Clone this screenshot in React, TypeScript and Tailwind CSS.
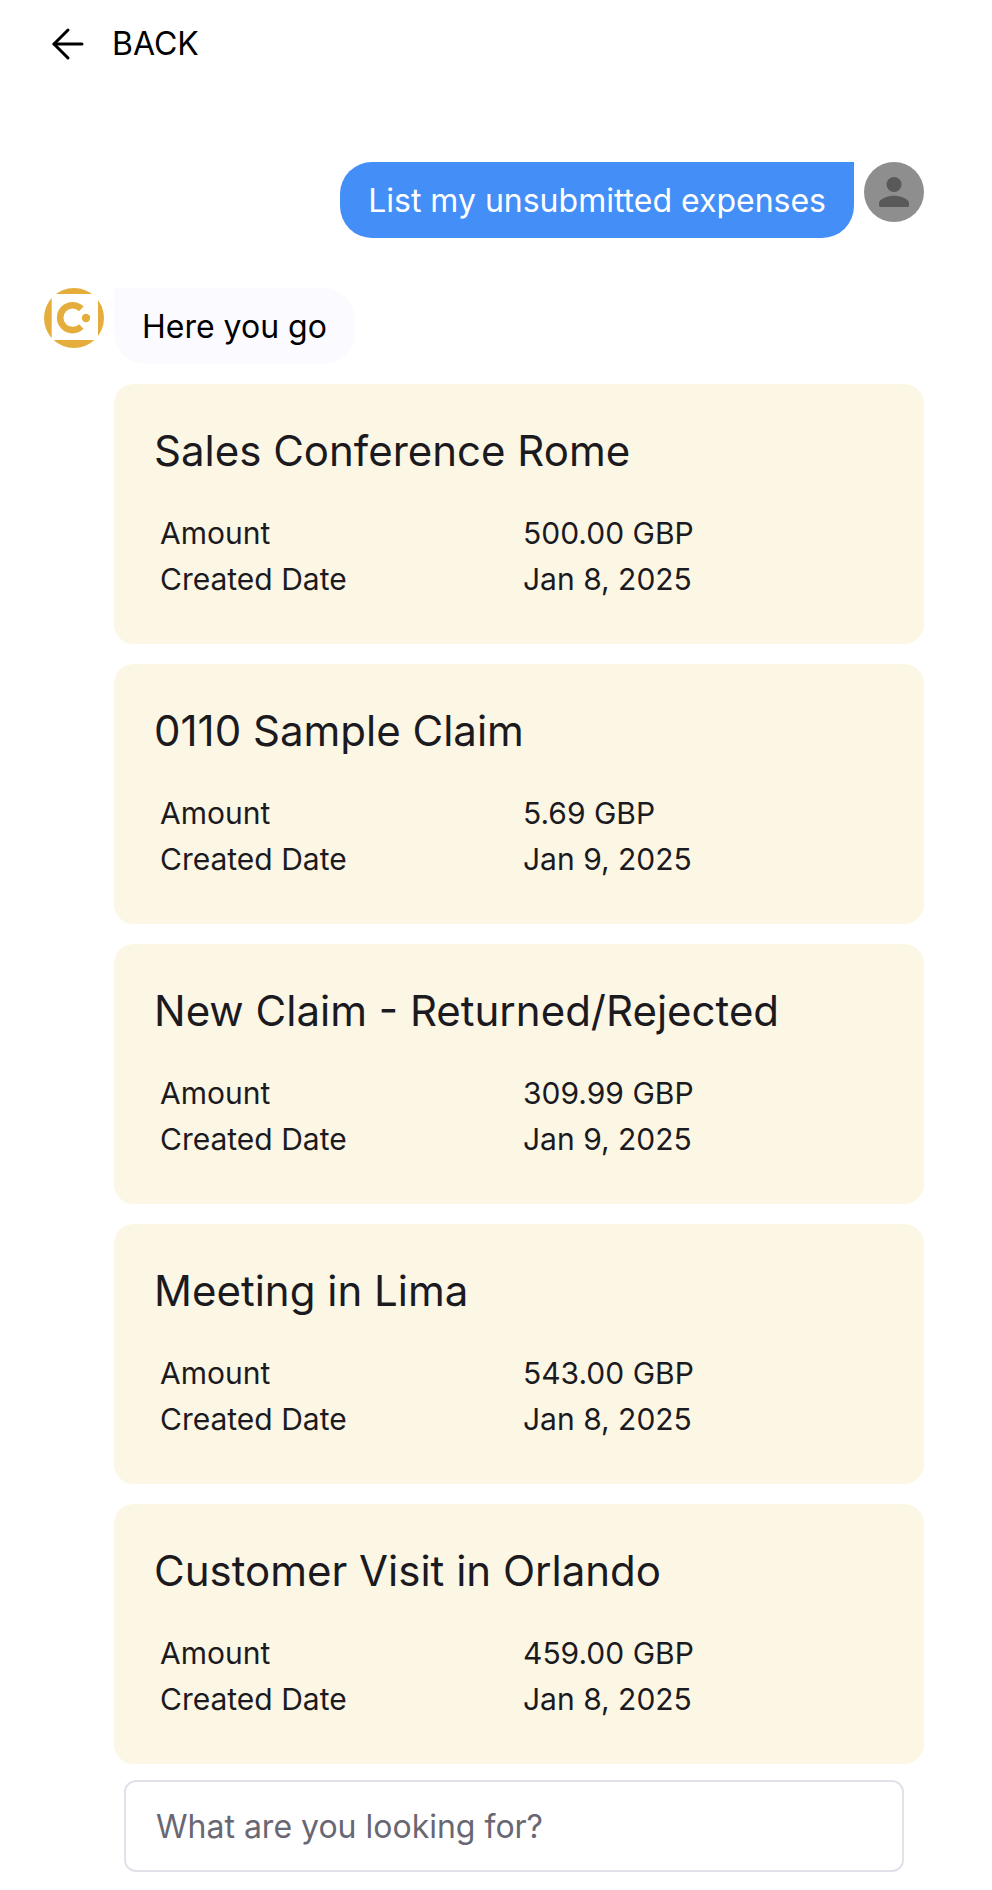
import { ArrowLeft } from 'lucide-react';

const expenses = [
  { title: 'Sales Conference Rome', amount: '500.00 GBP', created: 'Jan 8, 2025' },
  { title: '0110 Sample Claim', amount: '5.69 GBP', created: 'Jan 9, 2025' },
  { title: 'New Claim - Returned/Rejected', amount: '309.99 GBP', created: 'Jan 9, 2025' },
  { title: 'Meeting in Lima', amount: '543.00 GBP', created: 'Jan 8, 2025' },
  { title: 'Customer Visit in Orlando', amount: '459.00 GBP', created: 'Jan 8, 2025' },
];

function UserAvatar() {
  return (
    <svg viewBox="0 0 60 60" className="size-[60px] shrink-0" role="img" aria-label="You">
      <circle cx="30" cy="30" r="30" fill="#8e8e8e" />
      <circle cx="30" cy="22.5" r="7.5" fill="#595959" />
      <path d="M30 33.8c-5 0-15 2.5-15 7.5v2.2c0 .8.7 1.5 1.5 1.5h27c.8 0 1.5-.7 1.5-1.5v-2.2c0-5-10-7.5-15-7.5z" fill="#595959" />
    </svg>
  );
}

function BotAvatar() {
  return (
    <svg viewBox="0 0 60 60" className="size-[60px] shrink-0" role="img" aria-label="Assistant">
      <circle cx="30" cy="30" r="30" fill="#e5ae3c" />
      <path d="M7.7 6H54v46H7.7z" fill="#fff" />
      <path d="M37.3 20.9a12.4 12.4 0 1 0 0 17.6" fill="none" stroke="#e5ae3c" strokeWidth="6.6" />
      <circle cx="42" cy="30" r="4.2" fill="#e5ae3c" />
    </svg>
  );
}

function ExpenseCard({ title, amount, created }: { title: string; amount: string; created: string }) {
  return (
    <article className="rounded-[20px] bg-[#fcf6e5] px-10 pt-10 pb-[42px] text-[#1b1a1f]">
      <h2 className="text-[42px] leading-[54px]">{title}</h2>
      <table className="mt-8 w-full table-fixed text-left text-[30px] leading-[46px]">
        <tbody>
          <tr>
            <th scope="row" className="px-1.5 font-normal">Amount</th>
            <td className="px-1">{amount}</td>
          </tr>
          <tr>
            <th scope="row" className="px-1.5 font-normal">Created Date</th>
            <td className="px-1">{created}</td>
          </tr>
        </tbody>
      </table>
    </article>
  );
}

export default function App() {
  return (
    <div className="min-h-screen bg-white font-['Inter',sans-serif] text-[32px] leading-10 text-black">
      <header className="px-11 py-5">
        <button type="button" className="flex h-12 items-center gap-5">
          <ArrowLeft size={48} strokeWidth={1.5} />
          BACK
        </button>
      </header>

      <main className="pt-[74px] pr-[68px] pl-11">
        <div className="flex items-start justify-end gap-2.5">
          <p className="rounded-[32px] rounded-tr-none bg-[#448ef8] px-7 pt-[19px] pb-[17px] text-white">
            List my unsubmitted expenses
          </p>
          <UserAvatar />
        </div>

        <div className="mt-[50px] flex items-start gap-2.5">
          <BotAvatar />
          <div className="flex-1">
            <p className="w-fit rounded-[32px] rounded-tl-none bg-[#fafaff] px-7 pt-[19px] pb-[17px]">Here you go</p>
            <div className="mt-5 flex flex-col gap-5">
              {expenses.map((expense) => (
                <ExpenseCard key={expense.title} {...expense} />
              ))}
            </div>
          </div>
        </div>
      </main>

      <form className="mt-4 pr-[88px] pb-[18px] pl-[124px]">
        <input
          type="text"
          aria-label="Message"
          placeholder="What are you looking for?"
          className="block h-[92px] w-full rounded-xl border-2 border-[#e2e1ea] px-[30px] placeholder:text-[#696773]"
        />
      </form>
    </div>
  );
}
